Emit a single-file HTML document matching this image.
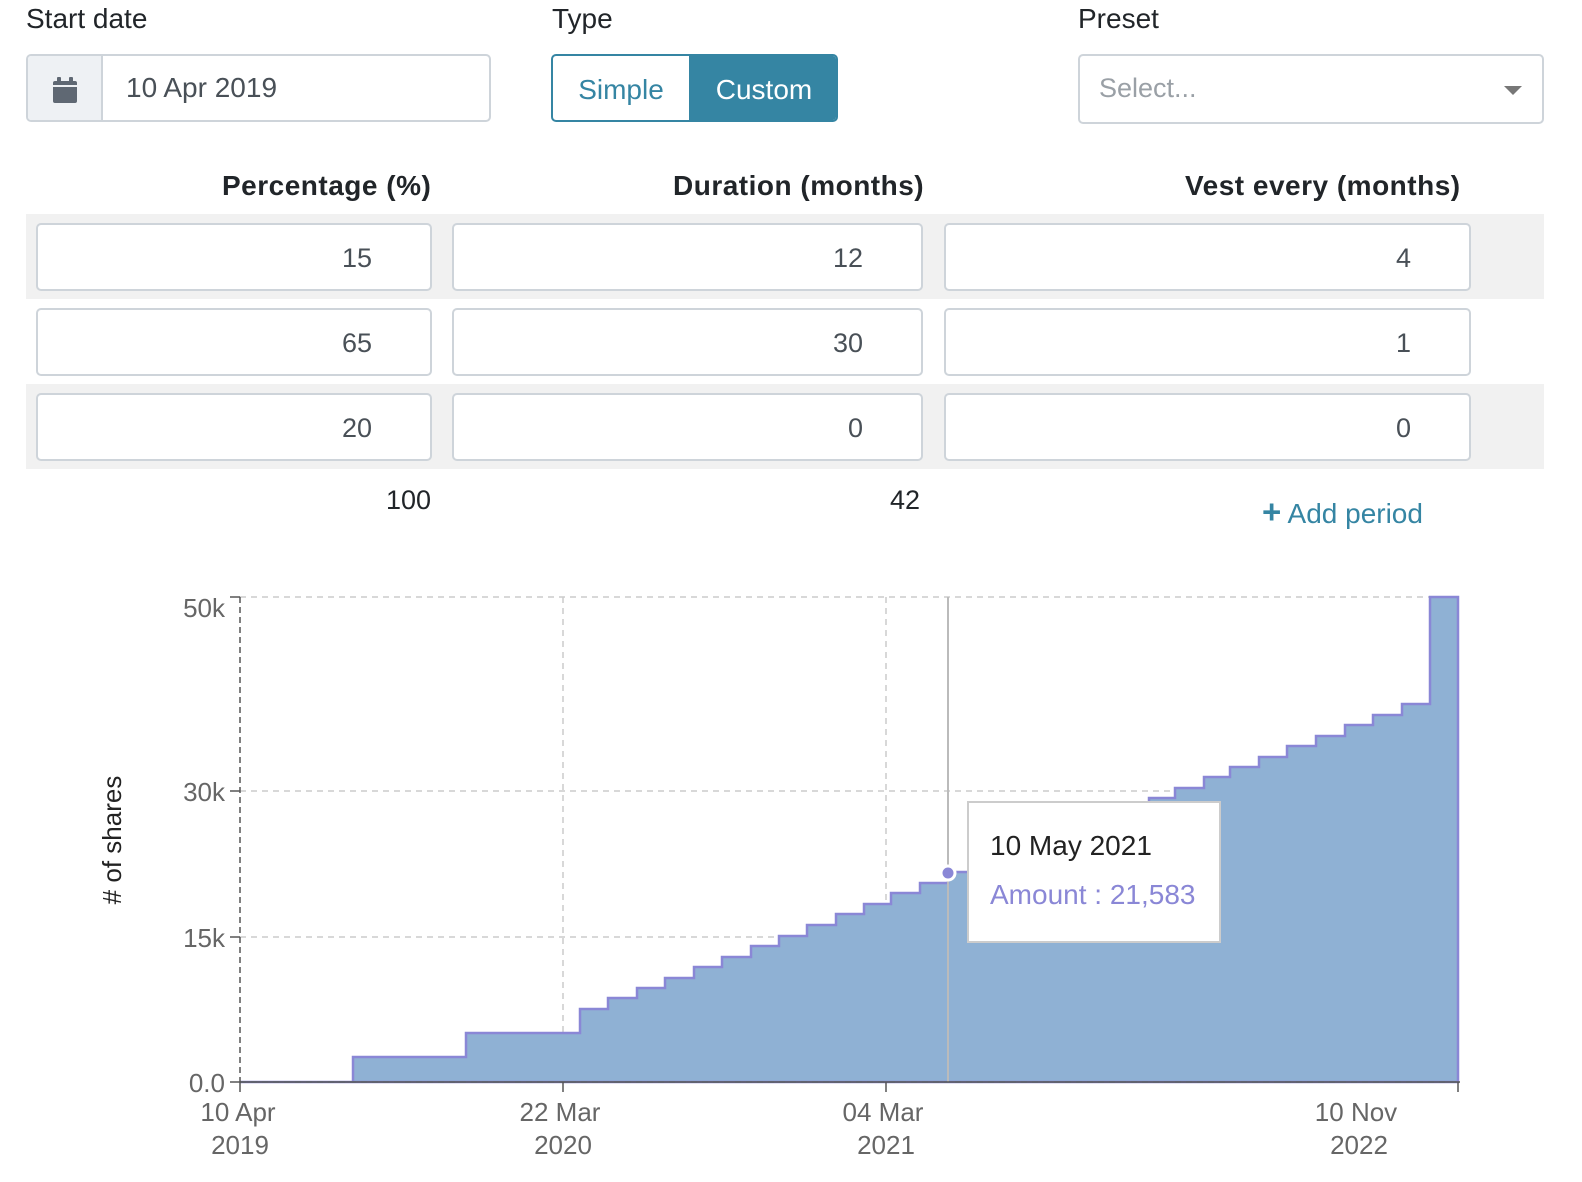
<!DOCTYPE html>
<html><head><style>
body{margin:0;width:1582px;height:1182px;background:#fff;font-family:"Liberation Sans",sans-serif;position:relative;overflow:hidden;color:#212529}
.a{position:absolute}
.lbl{font-size:28px;color:#212529}
.inp{position:absolute;background:#fff;border:2px solid #ced4da;border-radius:5px;box-sizing:border-box;height:68px;font-size:27px;color:#495057;text-align:right;line-height:66px;padding-right:58px}
.band{position:absolute;left:26px;width:1518px;height:85px;background:#f1f1f1}
.hd{position:absolute;font-size:28px;font-weight:bold;top:170px;letter-spacing:0.5px}
</style></head><body>
<div class="a lbl" style="left:26px;top:3px">Start date</div>
<div class="a lbl" style="left:552px;top:3px">Type</div>
<div class="a lbl" style="left:1078px;top:3px">Preset</div>

<div class="a" style="left:26px;top:54px;width:465px;height:68px;border:2px solid #ced4da;border-radius:5px;box-sizing:border-box;overflow:hidden">
 <div class="a" style="left:0;top:0;width:73px;height:64px;background:#eef1f4;border-right:2px solid #ced4da"></div>
 <svg class="a" style="left:24px;top:20px" width="26" height="28" viewBox="0 0 26 28"><rect x="1" y="5" width="24" height="22" rx="2" fill="#5f6873"/><rect x="5" y="1" width="4" height="7" rx="1" fill="#5f6873"/><rect x="17" y="1" width="4" height="7" rx="1" fill="#5f6873"/><rect x="1" y="9" width="24" height="2" fill="#eef1f4"/></svg>
 <div class="a" style="left:98px;top:16px;font-size:28px;color:#495057">10 Apr 2019</div>
</div>

<div class="a" style="left:551px;top:54px;width:287px;height:68px;border:2px solid #3585a3;border-radius:5px;box-sizing:border-box;overflow:hidden">
 <div class="a" style="left:0;top:0;width:136px;height:64px;color:#3585a3;font-size:28px;text-align:center;line-height:68px">Simple</div>
 <div class="a" style="left:136px;top:0;width:150px;height:64px;background:#3585a3;color:#fff;font-size:28px;text-align:center;line-height:68px">Custom</div>
</div>

<div class="a" style="left:1078px;top:54px;width:466px;height:70px;border:2px solid #ced4da;border-radius:5px;box-sizing:border-box">
 <div class="a" style="left:19px;top:17px;font-size:27px;color:#9aa0a6">Select...</div>
 <div class="a" style="left:424px;top:30px;width:0;height:0;border-left:9px solid transparent;border-right:9px solid transparent;border-top:9px solid #777"></div>
</div>

<div class="hd" style="left:222px">Percentage (%)</div>
<div class="hd" style="left:673px">Duration (months)</div>
<div class="hd" style="left:1185px">Vest every (months)</div>

<div class="band" style="top:214px"></div>
<div class="band" style="top:384px"></div>

<div class="inp" style="left:36px;top:223px;width:396px">15</div>
<div class="inp" style="left:452px;top:223px;width:471px">12</div>
<div class="inp" style="left:944px;top:223px;width:527px">4</div>
<div class="inp" style="left:36px;top:308px;width:396px">65</div>
<div class="inp" style="left:452px;top:308px;width:471px">30</div>
<div class="inp" style="left:944px;top:308px;width:527px">1</div>
<div class="inp" style="left:36px;top:393px;width:396px">20</div>
<div class="inp" style="left:452px;top:393px;width:471px">0</div>
<div class="inp" style="left:944px;top:393px;width:527px">0</div>

<div class="a" style="left:386px;top:485px;font-size:27px">100</div>
<div class="a" style="left:890px;top:485px;font-size:27px">42</div>
<div class="a" style="left:1262px;top:498px;font-size:28px;color:#3585a3"><span style="font-weight:bold;font-size:33px;line-height:26px">+</span> Add period</div>

<svg class="a" style="left:0;top:0" width="1582" height="1182" font-family="Liberation Sans, sans-serif">
 <g stroke="#ccc" stroke-width="1.5" stroke-dasharray="6,5" fill="none">
  <line x1="240" y1="597" x2="1458" y2="597"/>
  <line x1="240" y1="791" x2="1458" y2="791"/>
  <line x1="240" y1="937" x2="1458" y2="937"/>
  <line x1="563" y1="597" x2="563" y2="1082"/>
  <line x1="886" y1="597" x2="886" y2="1082"/>
  <line x1="1458" y1="597" x2="1458" y2="1082"/>
 </g>
 <path d="M240,1082 H353 V1057 H466 V1033 H580 V1009 H608 V998 H637 V988 H665 V978 H694 V967 H722 V957 H751 V946 H779 V936 H807 V925 H836 V914 H864 V904 H891 V893 H920 V883 H948 V872 H976 V861 H1004 V851 H1033 V840 H1061 V830 H1090 V819 H1118 V808 H1149 V798 H1175 V788 H1204 V777 H1230 V767 H1259 V757 H1287 V746 H1316 V736 H1345 V725 H1373 V715 H1402 V704 H1430 V597 H1458 V1082 Z" fill="#8fb1d4" stroke="#8a87d6" stroke-width="2.5"/>
 <line x1="240" y1="1082" x2="1458" y2="1082" stroke="#7d93a8" stroke-width="1.5" stroke-dasharray="6,5"/>
 <line x1="948" y1="597" x2="948" y2="1082" stroke="#bbb" stroke-width="2"/>
 <circle cx="948" cy="873" r="7" fill="#8a87d6" stroke="#fff" stroke-width="3"/>
 <line x1="240" y1="597" x2="240" y2="1082" stroke="#555" stroke-width="1.5" stroke-dasharray="6,4"/>
 <line x1="240" y1="1082" x2="1460" y2="1082" stroke="#555" stroke-width="1.5"/>
 <g stroke="#555" stroke-width="1.5">
  <line x1="230" y1="597" x2="240" y2="597"/><line x1="230" y1="791" x2="240" y2="791"/><line x1="230" y1="937" x2="240" y2="937"/><line x1="230" y1="1082" x2="240" y2="1082"/>
  <line x1="240" y1="1082" x2="240" y2="1092"/><line x1="563" y1="1082" x2="563" y2="1092"/><line x1="886" y1="1082" x2="886" y2="1092"/><line x1="1458" y1="1082" x2="1458" y2="1092"/>
 </g>
 <g font-size="26" fill="#666" text-anchor="end">
  <text x="225" y="617">50k</text><text x="225" y="801">30k</text><text x="225" y="947">15k</text><text x="225" y="1092">0.0</text>
 </g>
 <g font-size="26" fill="#666" text-anchor="middle">
  <text x="238" y="1121">10 Apr</text><text x="240" y="1154">2019</text>
  <text x="560" y="1121">22 Mar</text><text x="563" y="1154">2020</text>
  <text x="883" y="1121">04 Mar</text><text x="886" y="1154">2021</text>
  <text x="1356" y="1121">10 Nov</text><text x="1359" y="1154">2022</text>
 </g>
 <text transform="translate(121,840) rotate(-90)" font-size="26" fill="#222" text-anchor="middle">#  of shares</text>
 <rect x="968" y="802" width="252" height="140" fill="#fff" stroke="#ccc" stroke-width="2"/>
 <text x="990" y="855" font-size="28" fill="#222">10 May 2021</text>
 <text x="990" y="904" font-size="28" fill="#8a87d6">Amount : 21,583</text>
</svg>
</body></html>
